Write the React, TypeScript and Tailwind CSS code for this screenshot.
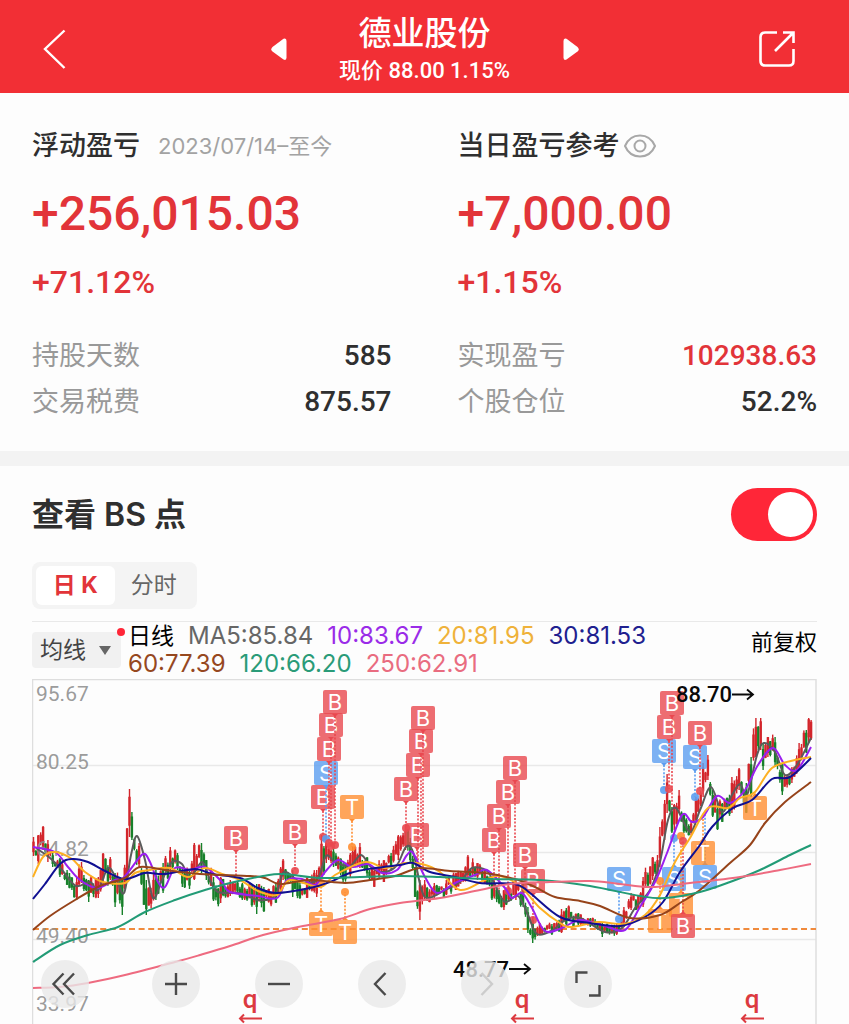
import { useState } from 'react';

type Point = [number, number];
type Kind = 'B' | 'S' | 'T';

const COLORS: Record<Kind, string> = { B: '#e9484f', S: '#5b9df0', T: '#ff8e32' };

/* x, high, low of representative bars; bars in between are interpolated */
const RANGE: [number, number, number][] = [
  [33, 837, 856], [38, 835, 864], [42, 826, 850], [47, 840, 862], [52, 853, 867], [60, 858, 877],
  [67, 870, 885], [76, 877, 900], [82, 862, 883], [89, 880, 902], [98, 877, 898], [103, 853, 885],
  [110, 857, 880], [116, 873, 907], [123, 880, 915], [127, 828, 880], [129, 789, 837], [132, 812, 840],
  [138, 843, 867], [143, 870, 905], [146, 880, 915], [155, 870, 900], [162, 863, 893], [170, 847, 873],
  [178, 853, 870], [183, 867, 887], [190, 870, 889], [194, 843, 880], [201, 843, 873], [207, 860, 880],
  [213, 877, 901], [220, 877, 903], [230, 880, 896], [243, 883, 900], [257, 884, 914], [263, 887, 912],
  [275, 883, 903], [280, 867, 893], [284, 859, 880], [292, 870, 897], [307, 877, 898], [317, 870, 897],
  [321, 835, 880], [327, 840, 863], [333, 847, 867], [343, 863, 883], [350, 853, 877], [359, 843, 868],
  [367, 857, 877], [375, 867, 887], [383, 860, 882], [390, 853, 870], [398, 835, 860], [406, 825, 850],
  [410, 838, 863], [416, 867, 897], [419, 880, 920], [425, 880, 900], [435, 883, 898], [447, 880, 895],
  [457, 873, 890], [469, 855, 880], [477, 863, 880], [485, 870, 883], [493, 880, 900], [505, 890, 910],
  [517, 880, 900], [523, 883, 907], [527, 907, 933], [532, 917, 943], [540, 923, 935], [553, 924, 935],
  [562, 909, 933], [567, 908, 927], [578, 913, 926], [590, 918, 927], [603, 923, 937], [617, 923, 935],
  [625, 907, 927], [632, 893, 910], [638, 896, 910], [643, 877, 907], [653, 857, 880], [657, 855, 878],
  [661, 827, 867], [664, 800, 840], [667, 774, 813], [671, 807, 833], [675, 804, 830], [679, 790, 813],
  [683, 813, 833], [692, 820, 835], [697, 797, 820], [704, 763, 797], [707, 755, 780], [713, 790, 817],
  [717, 803, 830], [723, 803, 822], [733, 777, 813], [740, 768, 790], [746, 783, 813], [750, 757, 797],
  [755, 718, 757], [760, 718, 750], [764, 743, 770], [769, 737, 757], [774, 737, 767], [782, 763, 795],
  [792, 767, 783], [798, 743, 770], [807, 730, 753], [809, 718, 743], [812, 720, 740],
];

const STEP = 2.4;

function buildCandles() {
  const bars: { x: number; hi: number; lo: number; top: number; bottom: number; up: boolean }[] = [];
  let seed = 41;
  const rand = () => {
    seed = (seed * 16807) % 2147483647;
    return seed / 2147483647;
  };
  let k = 0;
  let prev = 846;
  for (let x = 33.5; x <= 812; x += STEP) {
    while (k < RANGE.length - 2 && RANGE[k + 1][0] < x) k += 1;
    const [x0, h0, l0] = RANGE[k];
    const [x1, h1, l1] = RANGE[k + 1];
    const exact = RANGE.find((r) => Math.abs(r[0] - x) <= STEP / 2);
    const t = Math.min(1, Math.max(0, (x - x0) / (x1 - x0)));
    const baseHi = h0 + (h1 - h0) * t;
    const baseLo = l0 + (l1 - l0) * t;
    const span = baseLo - baseHi;
    const shift = (rand() - 0.5) * Math.min(14, span * 0.5);
    const hi = exact ? exact[1] : baseHi + shift + rand() * span * 0.4;
    const lo = exact ? exact[2] : baseLo + shift - rand() * span * 0.4;
    const mid = (hi + lo) / 2;
    const up = mid + (rand() - 0.5) * 10 < prev;
    const top = hi + (lo - hi) * rand() * 0.25;
    const bottom = lo - (lo - hi) * rand() * 0.25;
    bars.push({ x, hi, lo, top, bottom, up });
    prev = mid;
  }
  return bars;
}

const CANDLES = buildCandles();

function smooth(p: Point[]) {
  let d = `M${p[0][0]} ${p[0][1]}`;
  for (let i = 0; i < p.length - 1; i += 1) {
    const a = p[Math.max(0, i - 1)];
    const b = p[i];
    const c = p[i + 1];
    const e = p[Math.min(p.length - 1, i + 2)];
    const c1x = b[0] + (c[0] - a[0]) / 6;
    const c1y = b[1] + (c[1] - a[1]) / 6;
    const c2x = c[0] - (e[0] - b[0]) / 6;
    const c2y = c[1] - (e[1] - b[1]) / 6;
    d += `C${c1x.toFixed(1)} ${c1y.toFixed(1)} ${c2x.toFixed(1)} ${c2y.toFixed(1)} ${c[0]} ${c[1]}`;
  }
  return d;
}

const AVERAGES: { color: string; points: Point[] }[] = [
  {
    color: '#5b5b5b',
    points: [[36, 848], [50, 858], [62, 870], [76, 886], [90, 882], [98, 890], [108, 868], [116, 878], [124, 893], [131, 855], [137, 836], [145, 860], [153, 898], [162, 880], [172, 862], [182, 864], [190, 878], [202, 862], [210, 880], [218, 892], [240, 893], [258, 900], [275, 896], [284, 872], [300, 882], [317, 880], [326, 856], [335, 862], [350, 866], [361, 855], [372, 868], [385, 872], [397, 865], [406, 847], [413, 852], [421, 888], [428, 898], [445, 890], [460, 882], [472, 868], [487, 871], [495, 885], [505, 902], [518, 896], [528, 915], [537, 934], [553, 930], [565, 920], [580, 918], [605, 932], [622, 928], [635, 908], [650, 890], [660, 862], [668, 820], [676, 808], [690, 832], [700, 810], [711, 787], [722, 812], [732, 795], [740, 784], [747, 795], [757, 755], [764, 743], [775, 752], [785, 775], [797, 765], [811, 738]],
  },
  {
    color: '#9a1ff0',
    points: [[33, 847], [55, 852], [68, 867], [80, 880], [97, 888], [115, 880], [122, 879], [130, 870], [143, 854], [150, 862], [158, 882], [165, 887], [175, 868], [190, 870], [205, 867], [222, 882], [230, 892], [258, 896], [277, 898], [287, 880], [302, 879], [315, 885], [325, 872], [338, 860], [352, 867], [368, 864], [382, 873], [397, 870], [407, 855], [413, 853], [425, 877], [437, 893], [455, 883], [475, 875], [487, 870], [505, 888], [512, 898], [522, 893], [532, 908], [545, 931], [562, 928], [580, 920], [605, 926], [625, 930], [640, 907], [655, 882], [667, 853], [682, 815], [692, 822], [703, 817], [717, 796], [730, 803], [745, 790], [758, 765], [773, 748], [785, 765], [797, 770], [811, 747]],
  },
  {
    color: '#fdb022',
    points: [[33, 877], [43, 857], [55, 852], [72, 859], [85, 872], [103, 882], [125, 883], [135, 873], [150, 870], [170, 868], [188, 877], [205, 868], [222, 874], [240, 880], [258, 891], [277, 895], [290, 880], [320, 887], [335, 875], [365, 862], [385, 868], [405, 863], [422, 864], [440, 872], [460, 890], [485, 880], [500, 876], [520, 886], [540, 908], [560, 923], [572, 927], [598, 922], [625, 924], [645, 915], [660, 895], [675, 862], [690, 838], [708, 808], [728, 808], [740, 798], [755, 792], [772, 768], [795, 760], [811, 757]],
  },
  {
    color: '#101092',
    points: [[33, 899], [45, 884], [60, 864], [72, 859], [88, 862], [105, 871], [125, 879], [145, 873], [165, 874], [195, 869], [212, 874], [240, 878], [258, 888], [277, 893], [310, 888], [330, 882], [350, 873], [375, 868], [400, 865], [413, 863], [430, 872], [455, 877], [480, 883], [515, 884], [530, 893], [560, 917], [590, 923], [620, 926], [645, 917], [663, 902], [680, 872], [700, 845], [712, 827], [733, 808], [752, 800], [772, 779], [790, 777], [811, 758]],
  },
  {
    color: '#96431a',
    points: [[33, 930], [50, 916], [75, 900], [100, 886], [125, 878], [140, 867], [165, 870], [200, 874], [250, 876], [265, 878], [280, 884], [310, 880], [345, 883], [370, 880], [395, 876], [420, 868], [450, 871], [485, 873], [515, 879], [535, 887], [555, 897], [580, 901], [600, 906], [630, 918], [660, 915], [680, 903], [700, 890], [730, 863], [750, 845], [765, 823], [785, 802], [811, 782]],
  },
  {
    color: '#229b76',
    points: [[33, 962], [60, 945], [88, 935], [118, 927], [145, 912], [175, 900], [205, 890], [230, 883], [263, 876], [283, 874], [320, 878], [360, 877], [400, 876], [440, 877], [490, 879], [540, 880], [590, 886], [640, 896], [665, 898], [700, 892], [730, 882], [760, 870], [790, 855], [811, 845]],
  },
  {
    color: '#ee6b80',
    points: [[33, 988], [60, 987], [88, 983], [125, 975], [175, 962], [200, 955], [230, 946], [263, 935], [303, 926], [340, 919], [370, 909], [400, 903], [440, 898], [480, 890], [510, 884], [550, 882], [590, 881], [620, 884], [650, 887], [690, 883], [740, 877], [780, 870], [811, 864]],
  },
];

/* box centre, and the y where the dotted stem ends; dot: whether the end carries a dot */
const MARKERS: { k: Kind; x: number; y: number; to: number; dot?: boolean }[] = [
  { k: 'B', x: 236, y: 838, to: 876 },
  { k: 'B', x: 295, y: 832, to: 871, dot: true },
  { k: 'B', x: 323, y: 797, to: 837, dot: true },
  { k: 'S', x: 326, y: 773, to: 839, dot: true },
  { k: 'B', x: 329, y: 749, to: 843, dot: true },
  { k: 'B', x: 331, y: 725, to: 846, dot: true },
  { k: 'B', x: 335, y: 702, to: 845, dot: true },
  { k: 'T', x: 352, y: 807, to: 847, dot: true },
  { k: 'T', x: 321, y: 924, to: 883, dot: true },
  { k: 'T', x: 345, y: 932, to: 892, dot: true },
  { k: 'B', x: 406, y: 789, to: 828, dot: true },
  { k: 'B', x: 417, y: 835, to: 878 },
  { k: 'B', x: 418, y: 765, to: 866 },
  { k: 'B', x: 421, y: 741, to: 870 },
  { k: 'B', x: 423, y: 718, to: 874 },
  { k: 'B', x: 494, y: 840, to: 884 },
  { k: 'B', x: 499, y: 816, to: 890 },
  { k: 'B', x: 508, y: 792, to: 891, dot: true },
  { k: 'B', x: 515, y: 768, to: 886 },
  { k: 'B', x: 533, y: 881, to: 920, dot: true },
  { k: 'B', x: 525, y: 855, to: 892 },
  { k: 'S', x: 619, y: 879, to: 919, dot: true },
  { k: 'S', x: 674, y: 879, to: 838, dot: true },
  { k: 'T', x: 660, y: 921, to: 881, dot: true },
  { k: 'T', x: 681, y: 905, to: 836, dot: true },
  { k: 'B', x: 683, y: 926, to: 841, dot: true },
  { k: 'S', x: 664, y: 751, to: 790, dot: true },
  { k: 'B', x: 669, y: 727, to: 789, dot: true },
  { k: 'B', x: 672, y: 703, to: 805 },
  { k: 'S', x: 695, y: 757, to: 797, dot: true },
  { k: 'B', x: 700, y: 733, to: 791, dot: true },
  { k: 'S', x: 705, y: 877, to: 815 },
  { k: 'T', x: 703, y: 853, to: 815 },
  { k: 'T', x: 755, y: 808, to: 795 },
];

function Marker({ k, x, y, to }: { k: Kind; x: number; y: number; to: number }) {
  const color = COLORS[k];
  const side = to > y ? 1 : -1;
  return (
    <g>
      <rect x={x - 12} y={y - 12} width="24" height="24" rx="2" fill={color} fillOpacity="0.8" />
      <path d={`M${x - 3} ${y + 12 * side}h6l-3 ${3 * side}z`} fill={color} />
      <text x={x} y={y + 8} textAnchor="middle" fontSize="22" fill="#fff" className="font-[Inter,sans-serif]">
        {k}
      </text>
      <path d={`M${x} ${y + 14 * side}V${to}`} stroke={color} strokeWidth="1.6" strokeDasharray="2 1.6" />
    </g>
  );
}

function Chart() {
  return (
    <svg viewBox="32 679 785 345" className="block w-full font-[Roboto,sans-serif]" role="img" aria-label="日K">
      <g stroke="#e9e9e9" strokeWidth="1.5" fill="none">
        <path d="M32 765.5H816M32 852.5H816M32 939.5H816" />
        <path d="M32.5 1024V679.5H816V1024" stroke="#dedede" />
      </g>
      <path d="M33 929H816" stroke="#f08a3c" strokeWidth="1.8" strokeDasharray="6 3.6" />
      {CANDLES.map((c) => (
        <g key={c.x} fill={c.up ? '#d3252b' : '#17802a'}>
          <rect x={c.x - 0.7} y={c.hi} width="1.4" height={c.lo - c.hi} />
          <rect x={c.x - 1.2} y={c.top} width="2.4" height={c.bottom - c.top} />
        </g>
      ))}
      <g fontSize="21" fill="#8f8f8f" fillOpacity="0.9">
        <text x="36" y="701">95.67</text>
        <text x="36" y="769">80.25</text>
        <text x="36" y="856">64.82</text>
        <text x="36" y="943">49.40</text>
        <text x="36" y="1011">33.97</text>
      </g>
      {MARKERS.map((m) => (
        <Marker key={`${m.x}-${m.y}`} k={m.k} x={m.x} y={m.y} to={m.to} />
      ))}
      {MARKERS.filter((m) => m.dot).map((m) => (
        <circle key={`${m.x}-${m.to}`} cx={m.x} cy={m.to} r="4" fill={COLORS[m.k]} fillOpacity="0.9" />
      ))}
      <g fill="none" strokeWidth="2" strokeLinejoin="round">
        {AVERAGES.map((a) => (
          <path key={a.color} d={smooth(a.points)} stroke={a.color} />
        ))}
      </g>
      <g fontSize="22" fontWeight="500" fill="#0a0a0a">
        <text x="676" y="702">88.70</text>
        <text x="453" y="977">48.77</text>
      </g>
      <g fill="none" stroke="#0a0a0a" strokeWidth="1.8">
        <path d="M732 694.500H753M747 689.500L753 694.500L747 699.500" />
        <path d="M509 969H530M524 964L530 969L524 974" />
      </g>
      {[250, 522, 752].map((x) => (
        <g key={x}>
          <text x={x} y="1008" textAnchor="middle" fontSize="26" fontWeight="500" fill="#dc3a40">
            q
          </text>
          <path d={`M${x + 12} 1018.500H${x - 10}M${x - 6} 1014.500L${x - 10} 1018.500L${x - 6} 1022.500`} fill="none" stroke="#dc3a40" strokeWidth="2" />
        </g>
      ))}
    </svg>
  );
}

const CONTROLS = [
  { label: '最早', d: 'M22.500 13.500L12.500 24L22.500 34.500M33 13.500L23 24L33 34.500' },
  { label: '放大', d: 'M13 24H35M24 13V35' },
  { label: '缩小', d: 'M13 24H35' },
  { label: '向左', d: 'M27.500 13L17 24L27.500 35' },
  { label: '向右', d: 'M20.500 13L31 24L20.500 35' },
  { label: '全屏', d: 'M12.500 23V12.500H23.500M25 35.500H35.500V25' },
];

const LEGEND = [
  { text: 'MA5:85.84', color: 'text-[#666666]' },
  { text: '10:83.67', color: 'text-[#9a2be8]' },
  { text: '20:81.95', color: 'text-[#efb23a]' },
  { text: '30:81.53', color: 'text-[#20208f]' },
  { text: '60:77.39', color: 'text-[#96481f]' },
  { text: '120:66.20', color: 'text-[#2a9b78]' },
  { text: '250:62.91', color: 'text-[#e96c80]' },
];

function Stat({ label, value, red }: { label: string; value: string; red?: boolean }) {
  return (
    <div className="flex h-[46px] items-center justify-between">
      <dt className="text-[27px] text-[#999999]">{label}</dt>
      <dd className={red ? 'font-[Roboto,sans-serif] text-[28px] font-medium text-[#e23439]' : 'font-[Roboto,sans-serif] text-[28px] font-medium text-[#2f2f2f]'}>
        {value}
      </dd>
    </div>
  );
}

export default function App() {
  const [on, setOn] = useState(true);
  const [tab, setTab] = useState<'day' | 'time'>('day');
  const active = 'flex-1 rounded-md bg-white font-bold text-[#e23439]';
  const idle = 'flex-1 rounded-md text-[#666666]';

  return (
    <div className="overflow-hidden bg-[#fdfdfd] font-[Inter,'Noto_Sans_CJK_SC',sans-serif] text-[#2f2f2f]">
      <header className="grid h-[93px] grid-cols-[1fr_auto_1fr] items-center bg-[#f22f35] px-8 pt-1 text-white">
        <button type="button" aria-label="返回" className="flex h-12 w-12 items-center justify-center justify-self-start">
          <svg viewBox="0 0 48 48" className="h-12 w-12" fill="none" stroke="currentColor" strokeWidth="2.400">
            <path d="M32.500 5.500L13 24L32.500 43" />
          </svg>
        </button>
        <div className="flex items-center">
          <button type="button" aria-label="上一只" className="p-1">
            <svg viewBox="0 0 16 24" className="h-6 w-4" fill="currentColor">
              <path d="M15.500 4V20.500Q15.500 24 12.500 22.500L1.500 14.500Q-1 12.500 1.500 10L12.500 1.800Q15.500 .5 15.500 4Z" />
            </svg>
          </button>
          <div className="w-[268px] text-center font-['Noto_Sans_CJK_SC',sans-serif]">
            <h1 className="text-[33px] leading-10 font-medium">德业股份</h1>
            <p className="mt-1 font-[Roboto,'Noto_Sans_CJK_SC',sans-serif] text-[22px] leading-8 font-medium">现价 88.00 1.15%</p>
          </div>
          <button type="button" aria-label="下一只" className="p-1">
            <svg viewBox="0 0 16 24" className="h-6 w-4" fill="currentColor">
              <path d="M.5 4V20.500Q.5 24 3.500 22.500L14.500 14.500Q17 12.500 14.500 10L3.500 1.800Q.5 .5 .5 4Z" />
            </svg>
          </button>
        </div>
        <button type="button" aria-label="分享" className="mr-5 flex h-12 w-10 items-center justify-center justify-self-end">
          <svg viewBox="0 0 40 40" className="h-10 w-10" fill="none" stroke="currentColor" strokeWidth="2.600">
            <path d="M20 3.500H8Q3.500 3.500 3.500 8V32Q3.500 36.500 8 36.500H32Q36.500 36.500 36.500 32V20" />
            <path d="M26 3.500H36.500V14M36.500 3.500L18 22" />
          </svg>
        </button>
      </header>

      <section className="grid grid-cols-2 gap-x-[66px] px-8 pt-[33px] pb-[26px]">
        <div>
          <div className="flex h-10 items-center gap-[18px] whitespace-nowrap">
            <h2 className="text-[27px] font-medium">浮动盈亏</h2>
            <span className="text-[22px] text-[#a3a3a3]">2023/07/14–至今</span>
          </div>
          <p className="mt-5 font-[Roboto,sans-serif] text-5xl leading-[56px] font-medium text-[#e23439]">+256,015.03</p>
          <p className="mt-5 font-[Roboto,sans-serif] text-[32px] leading-10 font-medium text-[#e23439]">+71.12%</p>
          <dl className="mt-[31px]">
            <Stat label="持股天数" value="585" />
            <Stat label="交易税费" value="875.57" />
          </dl>
        </div>
        <div>
          <div className="flex h-10 items-center gap-1 whitespace-nowrap">
            <h2 className="text-[27px] font-medium">当日盈亏参考</h2>
            <button type="button" aria-label="显示">
              <svg viewBox="0 0 32 24" className="h-6 w-8" fill="none" stroke="#a8a8a8" strokeWidth="2">
                <path d="M1 12C4 5 9.500 1.500 16 1.500S28 5 31 12C28 19 22.500 22.500 16 22.500S4 19 1 12Z" />
                <circle cx="16" cy="12" r="5.500" />
              </svg>
            </button>
          </div>
          <p className="mt-5 font-[Roboto,sans-serif] text-5xl leading-[56px] font-medium text-[#e23439]">+7,000.00</p>
          <p className="mt-5 font-[Roboto,sans-serif] text-[32px] leading-10 font-medium text-[#e23439]">+1.15%</p>
          <dl className="mt-[31px]">
            <Stat label="实现盈亏" value="102938.63" red />
            <Stat label="个股仓位" value="52.2%" />
          </dl>
        </div>
      </section>

      <div className="h-[15px] bg-[#f3f3f3]" />

      <section className="px-8 pt-[22px]">
        <div className="flex h-[53px] items-center justify-between">
          <label htmlFor="bs" className="text-[32px] font-semibold">
            查看 BS 点
          </label>
          <input
            id="bs"
            type="checkbox"
            role="switch"
            checked={on}
            onChange={() => setOn(!on)}
            className="flex h-[53px] w-[86px] appearance-none items-center rounded-full bg-[#cccccc] px-1 before:h-[45px] before:w-[45px] before:rounded-full before:bg-white before:content-[''] checked:justify-end checked:bg-[#ff2638]"
          />
        </div>

        <div className="mt-[21px] flex h-[47px] w-[165px] rounded-lg bg-[#f4f4f4] p-1 text-[23px]">
          <button type="button" className={tab === 'day' ? active : idle} onClick={() => setTab('day')}>
            日 K
          </button>
          <button type="button" className={tab === 'time' ? active : idle} onClick={() => setTab('time')}>
            分时
          </button>
        </div>

        <div className="mt-3 flex border-t border-[#e9e9e9]">
          <div className="relative mt-[10px] h-9 w-[89px] shrink-0">
            <select aria-label="指标" className="h-9 w-full appearance-none rounded-sm bg-[#f1f1f1] pl-2 text-[23px] leading-9 text-[#444444]">
              <option>均线</option>
            </select>
            <svg viewBox="0 0 12 9" className="pointer-events-none absolute top-3.5 right-2.5 h-[9px] w-3" fill="#666666">
              <path d="M0 0H12L6 9Z" />
            </svg>
            <span className="absolute -top-1 -right-1 h-2 w-2 rounded-full bg-[#ff2638]" />
          </div>
          <div className="ml-[7px] flex min-w-0 flex-1 flex-wrap gap-x-[14px] text-2xl leading-7">
            <span className="text-[23px] leading-7 text-black">日线</span>
            {LEGEND.map((l) => (
              <span key={l.text} className={l.color}>
                {l.text}
              </span>
            ))}
          </div>
          <span className="mt-1 shrink-0 text-[22px] leading-8 text-black">前复权</span>
        </div>

        <div className="relative mt-px">
          <Chart />
          <div className="absolute bottom-4 left-[9px] flex gap-[55px]">
            {CONTROLS.map((c, i) => (
              <button
                key={c.label}
                type="button"
                aria-label={c.label}
                className={i === 0 ? 'mr-2 rounded-full bg-[#e8e8e8]/80 text-[#4a4a4a]' : i === 4 ? 'rounded-full bg-[#e8e8e8]/80 text-[#cccccc]' : 'rounded-full bg-[#e8e8e8]/80 text-[#4a4a4a]'}
              >
                <svg viewBox="0 0 48 48" className="h-12 w-12" fill="none" stroke="currentColor" strokeWidth="2.400">
                  <path d={c.d} />
                </svg>
              </button>
            ))}
          </div>
        </div>
      </section>
    </div>
  );
}
